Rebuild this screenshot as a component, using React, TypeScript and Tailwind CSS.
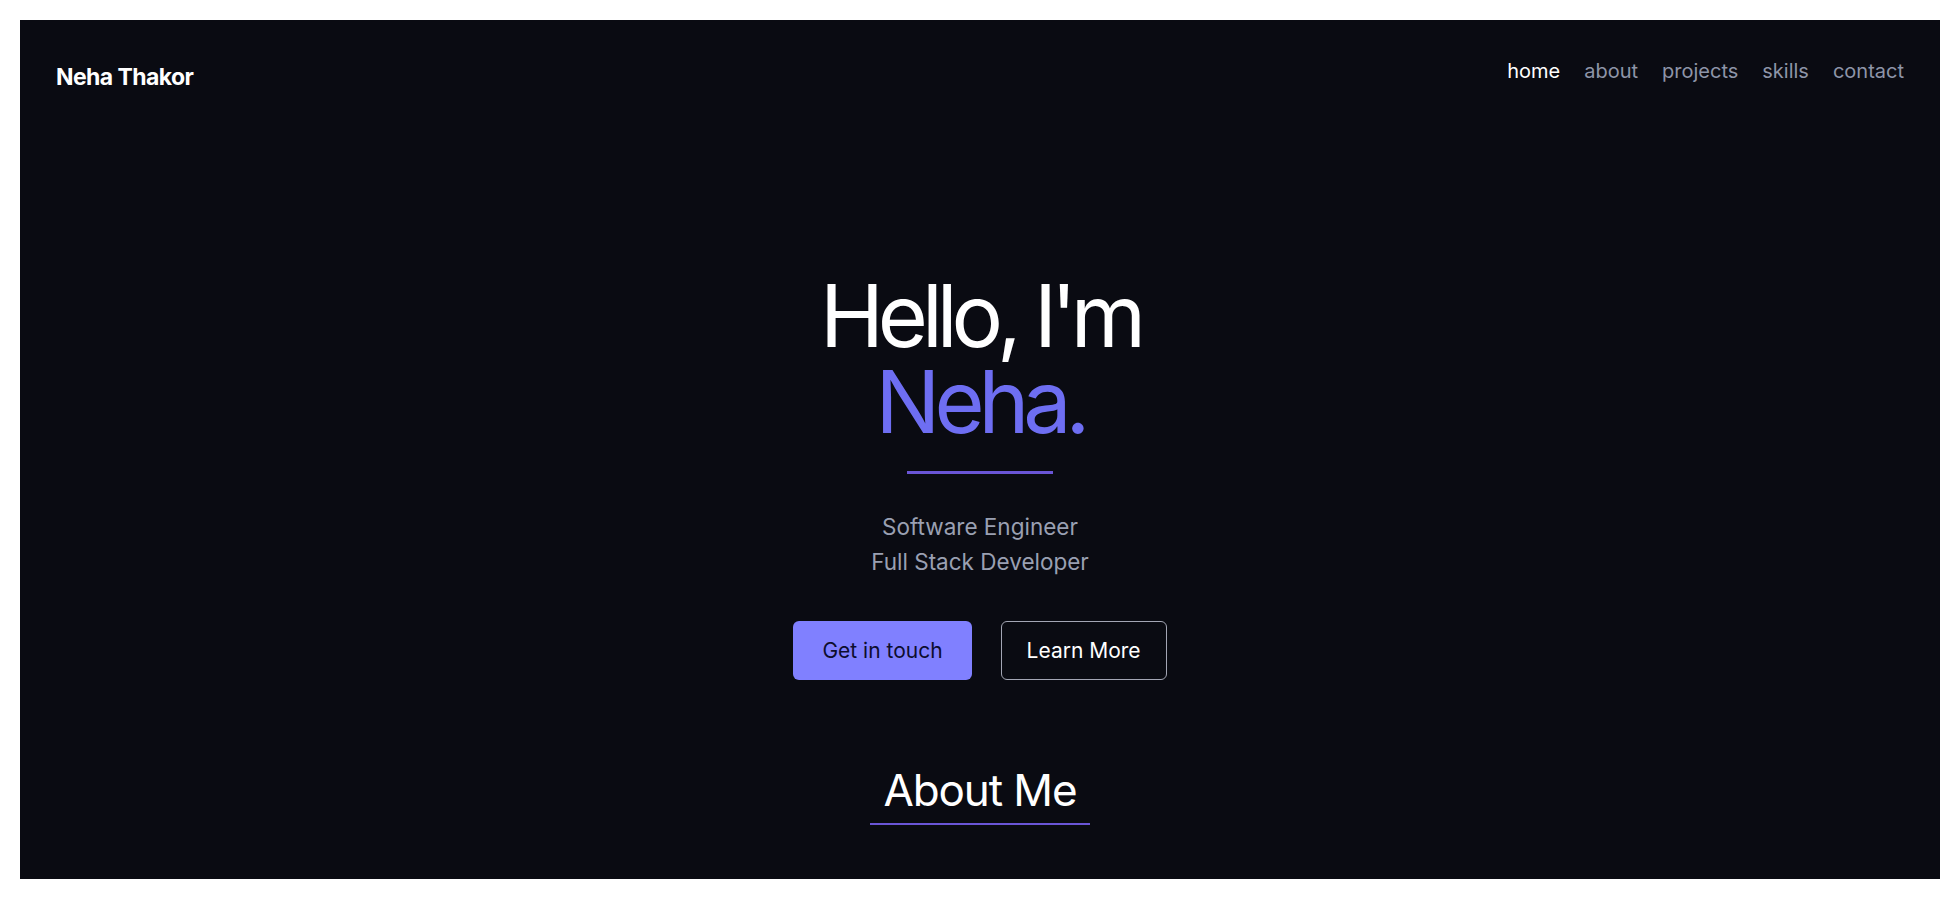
const links = ['home', 'about', 'projects', 'skills', 'contact']

export default function App() {
  return (
    <div className="h-screen bg-white p-5 font-['Inter',sans-serif]">
      <div className="h-full overflow-hidden bg-[#0a0b12] text-white">
        {/* Header */}
        <header className="flex items-start justify-between px-9 pt-10">
          <div className="pt-[3px] text-[23px] font-bold leading-7 tracking-tight">Neha Thakor</div>
          <nav className="-mt-[3px] flex gap-6 text-[20px] leading-7">
            {links.map((l, i) => (
              <a key={l} href="#" className={i === 0 ? 'text-white' : 'text-[#8e95a8]'}>
                {l}
              </a>
            ))}
          </nav>
        </header>

        {/* Hero */}
        <section className="mt-[182px] flex flex-col items-center text-center">
          <h1 className="text-[86px] font-normal leading-[86px] tracking-[-0.07em]">
            Hello, I'm
            <br />
            <span className="text-[#6e6ef2]">Neha.</span>
          </h1>
          <div className="mt-[26px] h-[3px] w-[146px] bg-[#6a55d6]" />
          <p className="mt-[35px] text-[22.5px] leading-[35px] text-[#9aa0b2]">
            Software Engineer
            <br />
            Full Stack Developer
          </p>
          <div className="mt-[42px] flex gap-[29px]">
            <button className="h-[59px] rounded-md bg-[#8080ff] px-[29px] text-[21px] text-[#0d0d2e]">Get in touch</button>
            <button className="h-[59px] rounded-md border border-[#a3a6b4] px-[25px] text-[21px] text-white">Learn More</button>
          </div>
        </section>

        {/* About */}
        <section className="mt-[84px] flex justify-center">
          <h2 className="border-b-2 border-[#6a55d6] px-[13px] pb-[6px] text-[44px] leading-[53px] tracking-tight">About Me</h2>
        </section>
      </div>
    </div>
  )
}
